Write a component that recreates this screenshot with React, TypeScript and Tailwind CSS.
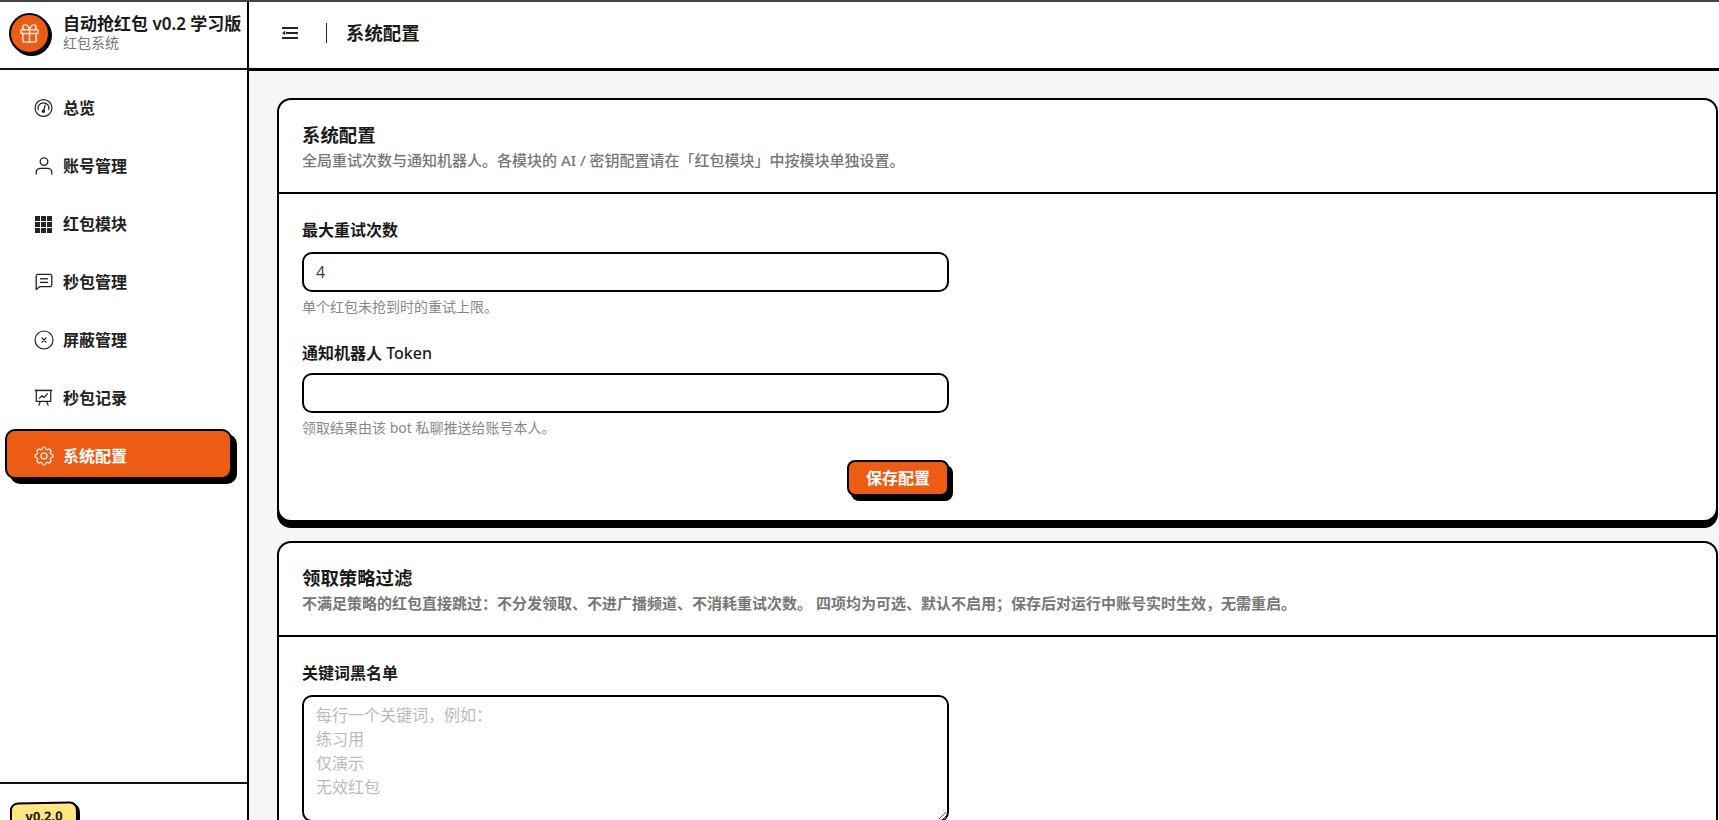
import React from 'react';
import { Gift } from 'lucide-react';
import { TbCircleX, TbSettings } from 'react-icons/tb';

const fontClass = "font-['Noto_Sans','Noto_Sans_CJK_SC',sans-serif]";

const GaugeIcon = () => (
	<svg width="20" height="20" viewBox="0 0 20 20" fill="none" stroke="currentColor" strokeWidth="1.3" strokeLinecap="round">
		<circle cx="10" cy="10" r="8.9" />
		<path d="M4.4 11.8a5.8 5.8 0 1 1 11.2 0" />
		<path d="M11.8 7 10.2 12.4" />
		<circle cx="9.9" cy="13.4" r="1.2" fill="currentColor" />
	</svg>
);

const UserIcon = () => (
	<svg width="18" height="18" viewBox="0 0 18 18" fill="none" stroke="currentColor" strokeWidth="1.3" strokeLinecap="round">
		<circle cx="9" cy="4.6" r="3.8" />
		<path d="M1.2 17v-1.6a4 4 0 0 1 4-4h7.6a4 4 0 0 1 4 4V17" />
	</svg>
);

const GridIcon = () => (
	<svg width="17" height="17" viewBox="0 0 17 17" fill="currentColor">
		{[0, 6, 12].map((y) =>
			[0, 6, 12].map((x) => <rect key={`${x}-${y}`} x={x} y={y} width="5" height="5" />),
		)}
	</svg>
);

const MessageIcon = () => (
	<svg width="18" height="18" viewBox="0 0 18 18" fill="none" stroke="currentColor" strokeWidth="1.3" strokeLinejoin="round">
		<path d="M1.2 3a1.6 1.6 0 0 1 1.6-1.6h12.4A1.6 1.6 0 0 1 16.8 3v9a1.6 1.6 0 0 1-1.6 1.6H5L1.2 16.6z" />
		<path d="M5 5.8h8" />
		<path d="M5 9.4h8" />
	</svg>
);

const ChartIcon = () => (
	<svg width="20" height="20" viewBox="0 0 20 20" fill="none" stroke="currentColor" strokeWidth="1.3" strokeLinejoin="round">
		<path d="M0.8 2h18.4" strokeWidth="1.6" />
		<path d="M2.4 2v11.6h15.2V2" />
		<path d="M5.4 10.6 8.4 7.6l2.2 1.8 3.8-4.2" />
		<path d="M6.6 13.6 5 18" />
		<path d="M13.4 13.6 15 18" />
	</svg>
);

const MenuIcon = () => (
	<svg width="16" height="14" viewBox="0 0 16 14" fill="none" stroke="currentColor" strokeWidth="2">
		<path d="M0 2h16" />
		<path d="M4 7h12" />
		<path d="M0 12h16" />
		<path d="M3 5 0.5 7 3 9z" fill="currentColor" strokeWidth="0.5" />
	</svg>
);

const navItems = [
	{ label: '总览', icon: <GaugeIcon /> },
	{ label: '账号管理', icon: <UserIcon /> },
	{ label: '红包模块', icon: <GridIcon /> },
	{ label: '秒包管理', icon: <MessageIcon /> },
	{ label: '屏蔽管理', icon: <TbCircleX size={24} strokeWidth={1.2} className="shrink-0" /> },
	{ label: '秒包记录', icon: <ChartIcon /> },
	{ label: '系统配置', icon: <TbSettings size={24} strokeWidth={1.2} className="shrink-0" />, active: true },
];

const Sidebar = () => (
	<aside className="w-[249px] shrink-0 border-r-2 border-black bg-white flex flex-col">
		{/* Brand */}
		<div className="h-[68px] shrink-0 border-b-2 border-[#111] flex items-start pl-[9px]">
			<div className="mt-[11px] w-[41px] h-[41px] shrink-0 rounded-full bg-[#ec5c14] border-2 border-black shadow-[2px_2px_0_#000] flex items-center justify-center text-[#ffe9dc]">
				<Gift size={23} strokeWidth={1.5} />
			</div>
			<div className="ml-[13px] mt-[10px] flex flex-col">
				<span className="text-[17px] leading-[24px] font-semibold text-[#1a1a1a] whitespace-nowrap">
					自动抢红包 v0.2 学习版
				</span>
				<span className="text-[14px] leading-[14px] text-[#777]">红包系统</span>
			</div>
		</div>

		{/* Nav */}
		<nav className="h-[712px] shrink-0 pt-[13px] flex flex-col gap-2">
			{navItems.map((item) => (
				<div
					key={item.label}
					className={`h-[50px] w-[227px] ml-[5px] shrink-0 rounded-[10px] flex items-center gap-[10px] text-[16px] font-semibold ${
						item.active
							? 'bg-[#ec5c14] text-white border-2 border-black shadow-[5px_5px_0_#000] pl-[27px] pt-[3px] -translate-y-[2px]'
							: 'text-[#222] pl-[29px]'
					}`}
				>
					<span className="w-[19px] h-[20px] flex items-center justify-center shrink-0">{item.icon}</span>
					{item.label}
				</div>
			))}
		</nav>

		{/* Version */}
		<div className="border-t-2 border-[#111] pt-[18px] pl-[10px]">
			<span className="inline-block -rotate-1 w-[68px] h-[30px] rounded-lg border-2 border-black bg-[#ffe680] shadow-[2px_2px_0_#000] text-center text-[13px] leading-[24px] font-bold text-[#1a1a1a]">
				v0.2.0
			</span>
		</div>
	</aside>
);

const Card: React.FC<{ title: string; desc: string; descBold?: boolean; children: React.ReactNode }> = ({
	title,
	desc,
	descBold,
	children,
}) => (
	<section className="w-[1441px] rounded-[14px] border-2 border-black bg-white shadow-[0_6px_0_#000] mb-[19px]">
		<div className="px-[23px] pt-[21px] h-[94px] border-b-2 border-black">
			<h2 className="text-[18.4px] leading-[27px] font-semibold text-[#1a1a1a]">{title}</h2>
			<p className={`mt-[1px] text-[15px] leading-[22px] text-[#777] whitespace-nowrap ${descBold ? 'font-semibold' : 'font-medium'}`}>
				{desc}
			</p>
		</div>
		<div className="px-[23px] pt-[24px] pb-[24px]">{children}</div>
	</section>
);

const Label: React.FC<{ children: React.ReactNode }> = ({ children }) => (
	<label className="block text-[16px] leading-[24px] font-semibold text-[#1a1a1a] mb-[10px]">{children}</label>
);

const Help: React.FC<{ children: React.ReactNode }> = ({ children }) => (
	<p className="mt-[5px] text-[14px] leading-[20px] text-[#888]">{children}</p>
);

const App: React.FC = () => {
	return (
		<div className={`h-screen overflow-hidden bg-white border-t-2 border-[#444] flex ${fontClass}`}>
			<Sidebar />

			<div className="flex-1 min-w-0 flex flex-col">
				{/* Header */}
				<header className="h-[69px] shrink-0 bg-white border-b-[3px] border-black flex items-center pl-[33px] pb-[4px] text-[#222]">
					<MenuIcon />
					<span className="ml-[28px] w-px h-[20px] bg-[#222]" />
					<h1 className="ml-[19px] text-[18.4px] font-semibold text-[#1a1a1a]">系统配置</h1>
				</header>

				{/* Content */}
				<main className="flex-1 bg-[#f7f5f5] pl-[28px] pt-[27px] overflow-hidden">
					<Card
						title="系统配置"
						desc="全局重试次数与通知机器人。各模块的 AI / 密钥配置请在「红包模块」中按模块单独设置。"
					>
						<Label>最大重试次数</Label>
						<input
							defaultValue="4"
							className="block w-[647px] h-[40px] rounded-[10px] border-2 border-black px-[12px] text-[16px] text-[#444] bg-white outline-none"
						/>
						<Help>单个红包未抢到时的重试上限。</Help>

						<div className="mt-[24px]">
							<label className="block text-[16px] leading-[24px] text-[#1a1a1a] mb-[8px]">
								<span className="font-semibold">通知机器人</span> <span className="font-medium">Token</span>
							</label>
							<input className="block w-[647px] h-[40px] rounded-[10px] border-2 border-black px-[12px] text-[16px] bg-white outline-none" />
							<Help>领取结果由该 bot 私聊推送给账号本人。</Help>
						</div>

						<div className="w-[647px] mt-[22px] flex justify-end">
							<button className="w-[102px] h-[36px] rounded-[8px] border-2 border-black bg-[#ec5c14] shadow-[4px_5px_0_#000] text-white text-[16px] font-semibold">
								保存配置
							</button>
						</div>
					</Card>

					<Card
						title="领取策略过滤"
						descBold
						desc="不满足策略的红包直接跳过：不分发领取、不进广播频道、不消耗重试次数。 四项均为可选、默认不启用；保存后对运行中账号实时生效，无需重启。"
					>
						<Label>关键词黑名单</Label>
						<textarea
							placeholder={'每行一个关键词，例如：\n练习用\n仅演示\n无效红包'}
							className="block w-[647px] h-[127px] rounded-[10px] border-2 border-black px-[12px] py-[6px] text-[16px] leading-[24px] bg-white outline-none placeholder:text-[#bbb]"
						/>
					</Card>
				</main>
			</div>
		</div>
	);
};

export default App;
